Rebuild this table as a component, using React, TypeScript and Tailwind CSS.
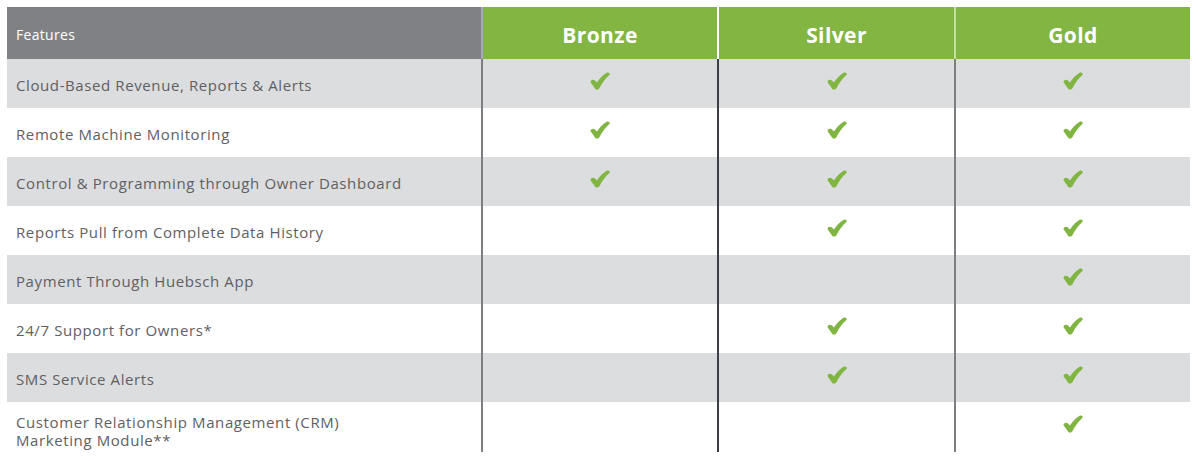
const COLUMNS = ["Bronze", "Silver", "Gold"];

const ROWS: { label: string[]; tiers: [boolean, boolean, boolean] }[] = [
  { label: ["Cloud-Based Revenue, Reports & Alerts"], tiers: [true, true, true] },
  { label: ["Remote Machine Monitoring"], tiers: [true, true, true] },
  { label: ["Control & Programming through Owner Dashboard"], tiers: [true, true, true] },
  { label: ["Reports Pull from Complete Data History"], tiers: [false, true, true] },
  { label: ["Payment Through Huebsch App"], tiers: [false, false, true] },
  { label: ["24/7 Support for Owners*"], tiers: [false, true, true] },
  { label: ["SMS Service Alerts"], tiers: [false, true, true] },
  { label: ["Customer Relationship Management (CRM)", "Marketing Module**"], tiers: [false, false, true] },
];

// divider colour for each tier column, body then header
const bodyBorder = ["border-[#7d7e82]", "border-[#3b3e46]", "border-[#7d7e82]"];
const headBorder = ["border-[#a9aaad]", "border-white", "border-[#c4e0a0]"];

// heavy brush-style check like U+2714
function Check() {
  return (
    <svg width="20" height="18" viewBox="0 0 20 18" className="block">
      <path
        d="M0.4 10 C1 7.8 3.4 7.2 5 8.6 L6.9 10.6 C9.4 6.6 12.8 3 16.6 0.8 C18.6 -0.3 20.6 1.6 19.4 3 C15.4 6.6 12 11 9.4 16.2 C8.4 18 5.8 18 5 16.4 Z"
        fill="#7fb540"
      />
    </svg>
  );
}

export default function App() {
  return (
    <div className="bg-white w-[1198px] h-[461px] pt-[7px] pl-[7px] font-['Open_Sans',sans-serif]">
      <div className="grid grid-cols-[474px_236px_237px_236px] w-[1183px]">
        {/* header */}
        <div className="h-[52px] bg-[#808184] flex items-center pl-[9px] pt-[3px] text-[14px] text-white tracking-[0.3px]">
          Features
        </div>
        {COLUMNS.map((c, i) => (
          <div
            key={c}
            className={`h-[52px] bg-[#82b541] border-l-2 ${headBorder[i]} flex items-center justify-center pt-[6px] text-[21px] font-bold text-white tracking-[0.4px]`}
          >
            {c}
          </div>
        ))}

        {/* body */}
        {ROWS.map((r, ri) => {
          const bg = ri % 2 === 0 ? "bg-[#dcdddf]" : "bg-white";
          const last = ri === ROWS.length - 1;
          const h = last ? "h-[50px]" : "h-[49px]";
          return [
            <div
              key={`l${ri}`}
              className={`${bg} ${h} flex flex-col justify-center pl-[9px] ${last ? "pt-[7px]" : "pt-[2px]"} text-[15px] leading-[18px] text-[#5f6063] tracking-[0.6px]`}
            >
              {r.label.map((t) => (
                <span key={t}>{t}</span>
              ))}
            </div>,
            ...r.tiers.map((on, ti) => (
              <div
                key={`t${ri}${ti}`}
                className={`${bg} ${h} border-l-2 ${bodyBorder[ti]} flex justify-center pt-[13px]`}
              >
                {on && <Check />}
              </div>
            )),
          ];
        })}
      </div>
    </div>
  );
}
